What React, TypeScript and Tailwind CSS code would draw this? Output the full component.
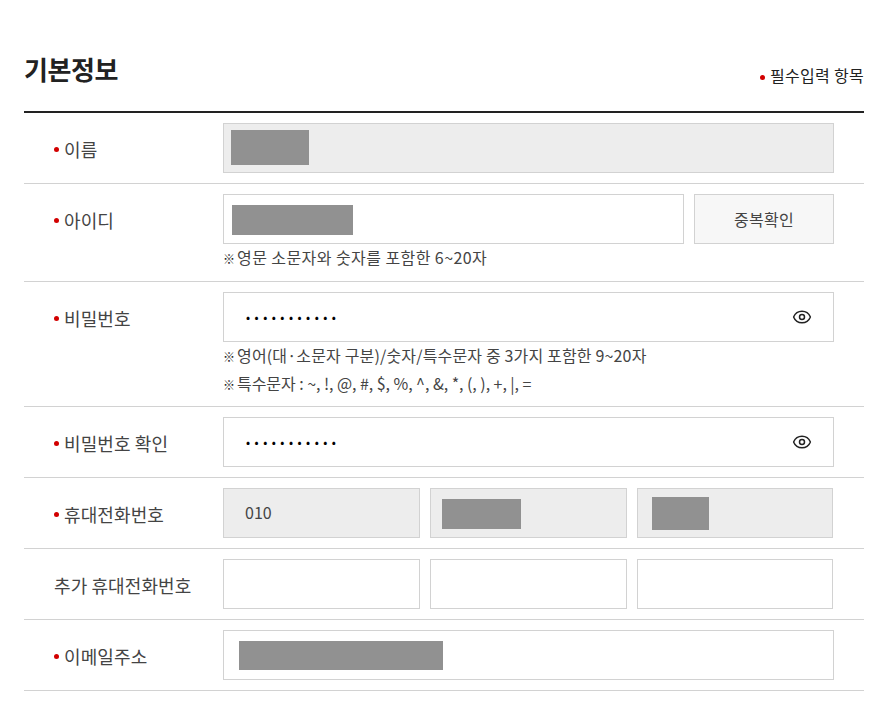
import { Eye } from "lucide-react";

const font = { fontFamily: '"Noto Sans CJK KR", "Noto Sans", sans-serif' };

const Dot = () => (
  <span className="inline-block w-[5px] h-[5px] rounded-full bg-[#d20000] mr-[5px] align-middle" />
);

const Redact = ({ className }: { className: string }) => (
  <div className={`absolute bg-[#919191] ${className}`} />
);

const Row = ({
  label,
  required = true,
  children,
}: {
  label: string;
  required?: boolean;
  children: React.ReactNode;
}) => (
  <div className="flex pt-[10px] border-b border-[#d2d2d2]">
    <div className="w-[199px] pl-[30px] h-[50px] flex items-center gap-[5px] pt-[2px] text-[18px] tracking-[0.1px] text-[#444444] shrink-0 whitespace-nowrap">
      {required && <span className="w-[5px] h-[5px] rounded-full bg-[#d20000]" />}
      {label}
    </div>
    <div className="w-[611px]">{children}</div>
  </div>
);

const Box = ({
  className = "",
  children,
}: {
  className?: string;
  children?: React.ReactNode;
}) => (
  <div
    className={`relative h-[50px] border border-[#d2d2d2] flex items-center ${className}`}
  >
    {children}
  </div>
);

const Password = () => (
  <Box className="w-full justify-between pl-[22px] pr-[21px]">
    <input
      type="password"
      readOnly
      value="12345678901"
      className="outline-none text-[12px] tracking-[4.5px] text-black w-[300px]"
    />
    <Eye size={20} strokeWidth={1.8} className="text-[#222222]" />
  </Box>
);

const Note = ({
  className,
  children,
}: {
  className: string;
  children: React.ReactNode;
}) => (
  <div className="flex items-center h-[28px] text-[16px] text-[#444444] whitespace-nowrap">
    <span className="text-[12px] font-bold text-[#222222] w-[14px] pt-[2px] leading-none">※</span>
    <span className={`leading-[28px] mt-[-2px] ${className}`}>{children}</span>
  </div>
);

export default function App() {
  return (
    <div
      className="w-[896px] h-[716px] overflow-hidden bg-white pl-[24px] pr-[32px] pt-[47px]"
      style={font}
    >
      <div className="flex justify-between h-[66px] border-b-2 border-[#222222]">
        <h2 className="text-[26px] leading-[44px] font-bold text-[#222222] tracking-[-0.4px]">
          기본정보
        </h2>
        <div className="text-[16px] leading-[24px] pt-[16px] tracking-[0.3px] text-[#222222]">
          <Dot />
          필수입력 항목
        </div>
      </div>

      <Row label="이름">
        <Box className="w-full bg-[#ededed] mb-[10px]">
          <Redact className="left-[7px] top-[6px] w-[78px] h-[35px]" />
        </Box>
      </Row>

      <Row label="아이디">
        <div className="flex gap-[10px]">
          <Box className="w-[461px]">
            <Redact className="left-[8px] top-[10px] w-[121px] h-[30px]" />
          </Box>
          <button className="w-[140px] h-[50px] border border-[#d2d2d2] bg-[#f7f7f7] text-[16px] tracking-[0.3px] text-[#444444]">
            중복확인
          </button>
        </div>
        <div className="pb-[9px]">
          <Note className="tracking-[0.43px]">영문 소문자와 숫자를 포함한 6~20자</Note>
        </div>
      </Row>

      <Row label="비밀번호">
        <Password />
        <div className="pb-[8px]">
          <Note className="tracking-[0.16px]">영어(대·소문자 구분)/숫자/특수문자 중 3가지 포함한 9~20자</Note>
          <Note className="tracking-[-0.05px]">특수문자 : ~, !, @, #, $, %, ^, &amp;, *, (, ), +, |, =</Note>
        </div>
      </Row>

      <Row label="비밀번호 확인">
        <div className="pb-[10px]">
          <Password />
        </div>
      </Row>

      <Row label="휴대전화번호">
        <div className="grid grid-cols-[197px_197px_196px] gap-[10px] pb-[10px]">
          <Box className="bg-[#ededed] pl-[21px] pb-[2px] text-[16px] text-[#444444]">010</Box>
          <Box className="bg-[#ededed]">
            <Redact className="left-[11px] top-[10px] w-[79px] h-[30px]" />
          </Box>
          <Box className="bg-[#ededed]">
            <Redact className="left-[14px] top-[8px] w-[57px] h-[33px]" />
          </Box>
        </div>
      </Row>

      <Row label="추가 휴대전화번호" required={false}>
        <div className="grid grid-cols-[197px_197px_196px] gap-[10px] pb-[10px]">
          <Box />
          <Box />
          <Box />
        </div>
      </Row>

      <Row label="이메일주소">
        <Box className="w-full mb-[10px]">
          <Redact className="left-[15px] top-[10px] w-[204px] h-[29px]" />
        </Box>
      </Row>
    </div>
  );
}
